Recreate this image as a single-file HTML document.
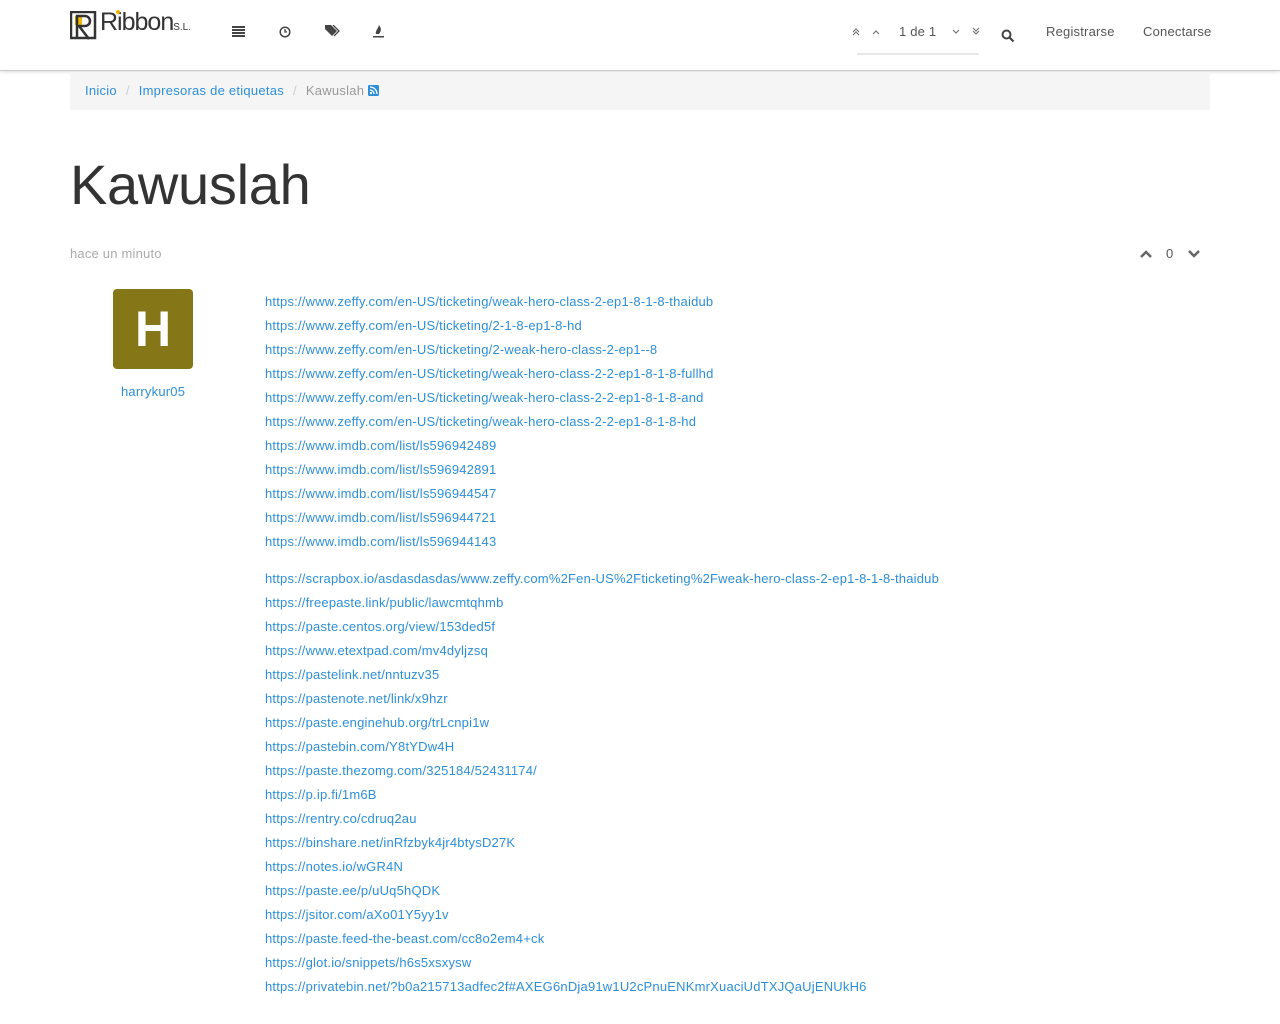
<!DOCTYPE html>
<html><head><meta charset="utf-8"><style>
*{margin:0;padding:0;box-sizing:border-box}
body{width:1280px;height:1024px;background:#fff;font-family:"Liberation Sans",sans-serif;color:#333;overflow:hidden;position:relative}
a{color:#2e8fd6;text-decoration:none}
.hdr{position:absolute;left:0;top:0;width:1280px;height:71px;border-bottom:1px solid #ccc;box-shadow:0 1px 3px rgba(0,0,0,.15);background:#fff}
.abs{position:absolute}
.nav{font-size:13px;color:#555;letter-spacing:0.2px}
.bc{position:absolute;left:70px;top:72px;width:1140px;height:38px;background:#f5f5f5;font-size:13px;line-height:38px;padding-left:15px;letter-spacing:0.25px}
.bc .s{color:#ccc;margin:0 9px}
h1{position:absolute;left:70px;top:152px;font-size:56px;font-weight:normal;color:#333;letter-spacing:-0.3px}
.links{position:absolute;left:265px;top:290px;font-size:13px;line-height:24px;letter-spacing:0.2px}
.links div{white-space:nowrap}
</style></head><body>
<div class="hdr">
<svg class="abs" style="left:70px;top:11px" width="30" height="30" viewBox="0 0 30 30"><rect x="1" y="1" width="24" height="26" fill="none" stroke="#333" stroke-width="2.5"/><rect x="5" y="5" width="7" height="9" fill="#f5b400"/><path d="M7 26V5h8a5 5 0 010 10H9l10 13" fill="none" stroke="#333" stroke-width="2.5"/></svg>
<div class="abs" style="left:100px;top:8px;font-size:25px;color:#333;letter-spacing:-1px">Ribbon<span style="font-size:10px;letter-spacing:0">S.L.</span></div>
<div class="abs" style="left:116px;top:10px;width:4px;height:4px;background:#f5b400;border-radius:50%"></div>
<svg class="abs" style="left:232px;top:26px" width="13" height="11"><g fill="#444"><rect y="0" width="13" height="2"/><rect y="3" width="13" height="2"/><rect y="6" width="13" height="2"/><rect y="9" width="13" height="2"/></g></svg>
<svg class="abs" style="left:279px;top:26px" width="12" height="12"><circle cx="6" cy="6" r="4.8" fill="none" stroke="#444" stroke-width="1.5"/><path d="M6 3v3h2" stroke="#444" stroke-width="1.3" fill="none"/></svg>
<svg class="abs" style="left:325px;top:25px" width="15" height="13"><path d="M0 0h6l6 6-5 5-7-7z" fill="#444"/><path d="M8 0l6 6-5 5" fill="none" stroke="#444" stroke-width="1.3"/></svg>
<svg class="abs" style="left:373px;top:25px" width="11" height="14"><path d="M6 0c2 3 3 5 0 9H3c-1-3 2-5 3-9z" fill="#444"/><rect x="0" y="11" width="11" height="1.5" fill="#444"/></svg>
<div class="abs nav" style="left:899px;top:24px">1 de 1</div>
<div class="abs" style="left:857px;top:53px;width:122px;height:2px;background:#e8e8e8"></div>
<svg class="abs" style="left:852px;top:27px" width="130" height="10" fill="none" stroke="#777" stroke-width="1.2"><path d="M1 5l3-3 3 3M1 8l3-3 3 3"/><path d="M21 7l3-3 3 3"/><path d="M101 3l3 3 3-3"/><path d="M121 1l3 3 3-3M121 4l3 3 3-3"/></svg>
<svg class="abs" style="left:1001px;top:29px" width="14" height="14"><circle cx="5.5" cy="5.5" r="4" fill="none" stroke="#444" stroke-width="2"/><path d="M8.5 8.5l4 4" stroke="#444" stroke-width="2.2"/></svg>
<div class="abs nav" style="left:1046px;top:24px">Registrarse</div>
<div class="abs nav" style="left:1143px;top:24px">Conectarse</div>
</div>
<div class="bc"><a>Inicio</a><span class="s">/</span><a>Impresoras de etiquetas</a><span class="s">/</span><span style="color:#999">Kawuslah</span> <svg width="11" height="11" style="vertical-align:-1px"><rect width="11" height="11" rx="1.5" fill="#2e8fd6"/><circle cx="3" cy="8" r="1.2" fill="#fff"/><path d="M2 5a4 4 0 014 4M2 2a7 7 0 017 7" stroke="#fff" stroke-width="1.3" fill="none"/></svg></div>
<h1>Kawuslah</h1>
<div class="abs" style="left:70px;top:246px;font-size:13px;color:#aaa;letter-spacing:0.2px">hace un minuto</div>
<svg class="abs" style="left:1140px;top:249px" width="62" height="10" fill="none" stroke="#666" stroke-width="2.5"><path d="M1 8l5-5 5 5"/><path d="M49 2l5 5 5-5"/></svg>
<div class="abs" style="left:1166px;top:246px;font-size:13px;color:#555">0</div>
<div class="abs" style="left:113px;top:289px;width:80px;height:80px;background:#857718;border-radius:4px;color:#fff;font-size:50px;font-weight:bold;text-align:center;line-height:80px">H</div>
<div class="abs" style="left:121px;top:384px;font-size:13px;letter-spacing:0.2px"><a>harrykur05</a></div>
<div class="links">
<div><a>https://www.zeffy.com/en-US/ticketing/weak-hero-class-2-ep1-8-1-8-thaidub</a></div>
<div><a>https://www.zeffy.com/en-US/ticketing/2-1-8-ep1-8-hd</a></div>
<div><a>https://www.zeffy.com/en-US/ticketing/2-weak-hero-class-2-ep1--8</a></div>
<div><a>https://www.zeffy.com/en-US/ticketing/weak-hero-class-2-2-ep1-8-1-8-fullhd</a></div>
<div><a>https://www.zeffy.com/en-US/ticketing/weak-hero-class-2-2-ep1-8-1-8-and</a></div>
<div><a>https://www.zeffy.com/en-US/ticketing/weak-hero-class-2-2-ep1-8-1-8-hd</a></div>
<div><a>https://www.imdb.com/list/ls596942489</a></div>
<div><a>https://www.imdb.com/list/ls596942891</a></div>
<div><a>https://www.imdb.com/list/ls596944547</a></div>
<div><a>https://www.imdb.com/list/ls596944721</a></div>
<div><a>https://www.imdb.com/list/ls596944143</a></div>
<div style="height:13px"></div>
<div><a>https://scrapbox.io/asdasdasdas/www.zeffy.com%2Fen-US%2Fticketing%2Fweak-hero-class-2-ep1-8-1-8-thaidub</a></div>
<div><a>https://freepaste.link/public/lawcmtqhmb</a></div>
<div><a>https://paste.centos.org/view/153ded5f</a></div>
<div><a>https://www.etextpad.com/mv4dyljzsq</a></div>
<div><a>https://pastelink.net/nntuzv35</a></div>
<div><a>https://pastenote.net/link/x9hzr</a></div>
<div><a>https://paste.enginehub.org/trLcnpi1w</a></div>
<div><a>https://pastebin.com/Y8tYDw4H</a></div>
<div><a>https://paste.thezomg.com/325184/52431174/</a></div>
<div><a>https://p.ip.fi/1m6B</a></div>
<div><a>https://rentry.co/cdruq2au</a></div>
<div><a>https://binshare.net/inRfzbyk4jr4btysD27K</a></div>
<div><a>https://notes.io/wGR4N</a></div>
<div><a>https://paste.ee/p/uUq5hQDK</a></div>
<div><a>https://jsitor.com/aXo01Y5yy1v</a></div>
<div><a>https://paste.feed-the-beast.com/cc8o2em4+ck</a></div>
<div><a>https://glot.io/snippets/h6s5xsxysw</a></div>
<div><a>https://privatebin.net/?b0a215713adfec2f#AXEG6nDja91w1U2cPnuENKmrXuaciUdTXJQaUjENUkH6</a></div>
</div>
</body></html>
